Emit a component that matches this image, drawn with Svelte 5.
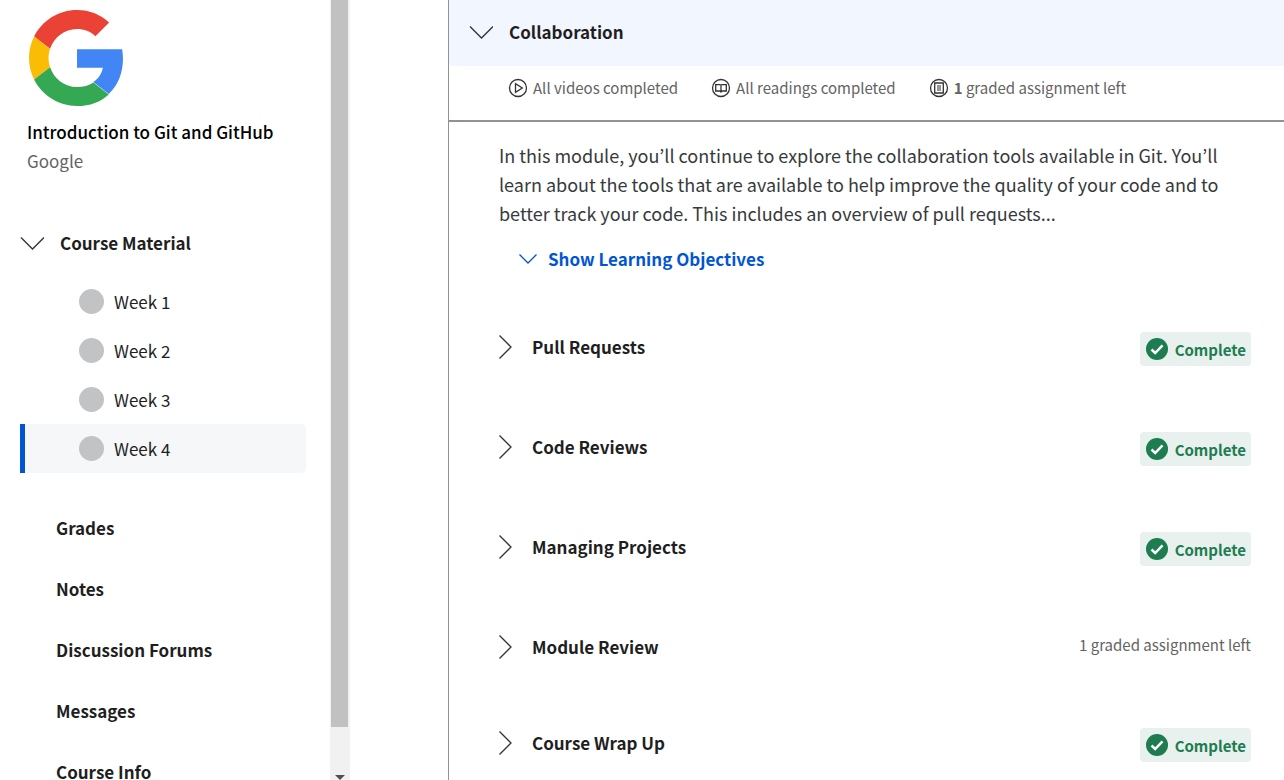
<script>
  const weeks = ['Week 1', 'Week 2', 'Week 3', 'Week 4'];
  const current = 'Week 4';
  const links = ['Grades', 'Notes', 'Discussion Forums', 'Messages', 'Course Info'];
  const lessons = [
    { title: 'Pull Requests', complete: true },
    { title: 'Code Reviews', complete: true },
    { title: 'Managing Projects', complete: true },
    { title: 'Module Review', complete: false, note: '1 graded assignment left' },
    { title: 'Course Wrap Up', complete: true }
  ];
</script>

<div class="page">
  <aside class="sidebar">
    <header class="course">
      <svg class="logo" viewBox="0 0 47 48" aria-hidden="true">
        <path fill="#EA4335" d="M24 9.5c3.54 0 6.71 1.22 9.21 3.6l6.85-6.85C35.9 2.38 30.47 0 24 0 14.62 0 6.51 5.38 2.56 13.22l7.98 6.19C12.43 13.72 17.74 9.5 24 9.5z" />
        <path fill="#4285F4" d="M46.98 24.55c0-1.57-.15-3.09-.38-4.95H24v9.22h12.94c-.58 2.96-2.26 5.48-4.78 7.18l7.73 6c4.51-4.18 7.09-10.36 7.09-17.45z" />
        <path fill="#FBBC05" d="M10.53 28.59c-.48-1.45-.76-2.99-.76-4.59s.27-3.14.76-4.59l-7.98-6.19C.92 16.46 0 20.12 0 24c0 3.88.92 7.54 2.56 10.78l7.97-6.19z" />
        <path fill="#34A853" d="M24 48c6.48 0 11.93-2.13 15.89-5.81l-7.73-6c-2.15 1.45-4.92 2.3-8.16 2.3-6.26 0-11.57-4.22-13.47-9.91l-7.98 6.19C6.51 42.62 14.62 48 24 48z" />
      </svg>
      <h1>Introduction to Git and GitHub</h1>
      <p>Google</p>
    </header>
    <nav>
      <button class="material" type="button" aria-expanded="true">
        <svg class="chevron" viewBox="0 0 24 24" aria-hidden="true"><path d="M1 6.500L12.500 18L24 6.500" /></svg>
        Course Material
      </button>
      <ul class="weeks">
        {#each weeks as week}
          <li>
            <a href="#top" class:current={week === current}><span class="dot"></span>{week}</a>
          </li>
        {/each}
      </ul>
      <ul class="links">
        {#each links as link}
          <li><a href="#top">{link}</a></li>
        {/each}
      </ul>
    </nav>
  </aside>

  <div class="scrollbar" aria-hidden="true">
    <div class="thumb"></div>
    <div class="track"></div>
    <svg class="arrow" viewBox="0 0 10 5"><path d="M0 0H10L5 5Z" /></svg>
  </div>

  <main>
    <button class="module" type="button" aria-expanded="true">
      <svg class="chevron" viewBox="0 0 24 24" aria-hidden="true"><path d="M1 6.500L12.500 18L24 6.500" /></svg>
      Collaboration
    </button>
    <ul class="progress">
      <li>
        <svg viewBox="0 0 20 20" aria-hidden="true"><circle cx="10" cy="10" r="8.500" /><path d="M7.500 5.700V14.300L14.300 10Z" /></svg>
        All videos completed
      </li>
      <li>
        <svg viewBox="0 0 20 20" aria-hidden="true"><circle cx="10" cy="10" r="8.500" /><path d="M4.700 6.700H9L10 7.300L11 6.700H15.300V13H11L10 14L9 13H4.700ZM10 7V14" /></svg>
        All readings completed
      </li>
      <li>
        <svg viewBox="0 0 20 20" aria-hidden="true"><circle cx="10" cy="10" r="8.500" /><path d="M5.700 5H14.300V15H5.700Z" /><path class="fine" d="M8 8H12M8 10H12M8 12H12" /></svg>
        <span><strong>1</strong> graded assignment left</span>
      </li>
    </ul>
    <section class="body">
      <p class="summary">
        In this module, you’ll continue to explore the collaboration tools available in Git. You’ll learn about the tools that are available to help improve the quality of your code and to better track your code. This includes an overview of pull requests...
      </p>
      <button class="objectives" type="button">
        <svg viewBox="0 0 20 20" aria-hidden="true"><path d="M1.500 5.500L10 14L18.500 5.500" /></svg>
        Show Learning Objectives
      </button>
      <ul class="lessons">
        {#each lessons as lesson}
          <li>
            <button type="button" aria-expanded="false">
              <svg class="chevron" viewBox="0 0 24 24" aria-hidden="true"><path d="M0.500 0.500L12 12L0.500 23.500" /></svg>
              {lesson.title}
            </button>
            {#if lesson.complete}
              <span class="badge">
                <svg viewBox="0 0 22 22" aria-hidden="true"><circle cx="11" cy="11" r="11" /><path d="M5.500 11.500L9.200 15L16.500 7.300" /></svg>
                Complete
              </span>
            {:else}
              <span class="note">{lesson.note}</span>
            {/if}
          </li>
        {/each}
      </ul>
    </section>
  </main>
</div>

<style>
  :global(body) {
    background: #fff;
  }
  .page {
    display: flex;
    height: 100vh;
    overflow: hidden;
    font-family: "Noto Sans CJK KR", "Noto Sans", sans-serif;
    font-size: 17px;
    line-height: 29px;
    color: #1f1f1f;
  }
  h1, p, ul {
    margin: 0;
    padding: 0;
  }
  ul {
    list-style: none;
  }
  button {
    display: flex;
    align-items: center;
    padding: 0;
    border: 0;
    background: none;
    color: inherit;
    font: inherit;
    font-weight: 700;
    text-align: left;
    cursor: pointer;
  }
  a {
    color: inherit;
    text-decoration: none;
  }
  svg {
    flex: none;
    fill: none;
  }
  .chevron {
    width: 24px;
    height: 24px;
    stroke: #333;
    stroke-width: 1.3;
  }
  .sidebar {
    flex: 0 0 330px;
    box-sizing: border-box;
    padding: 10px 24px 0 20px;
    overflow: hidden;
  }
  .course {
    padding-left: 7px;
  }
  .logo {
    display: block;
    width: 94px;
    height: 96px;
    margin: 0 0 11px 2px;
  }
  h1 {
    font-size: 17px;
    font-weight: 500;
    color: #000;
  }
  .course p {
    color: #636363;
  }
  .material {
    gap: 16px;
    margin: 53px 0 20px;
  }
  .weeks a {
    display: flex;
    align-items: center;
    gap: 10px;
    height: 49px;
    padding-left: 54px;
    border-left: 5px solid transparent;
    border-radius: 0 5px 5px 0;
  }
  .weeks a.current {
    border-left-color: #0056d2;
    background: #f5f7f8;
  }
  .dot {
    width: 25px;
    height: 25px;
    border-radius: 50%;
    background: #c1c3c5;
  }
  .links {
    padding: 24px 0 0 36px;
    font-weight: 700;
    line-height: 61px;
  }
  .scrollbar {
    flex: 0 0 20px;
    box-sizing: border-box;
    display: flex;
    flex-direction: column;
    align-items: center;
    padding-right: 1px;
    background: #f1f1f1;
  }
  .thumb {
    flex: 728;
    width: 17px;
    background: #c1c1c1;
  }
  .track {
    flex: 48;
  }
  .arrow {
    width: 10px;
    height: 5px;
    fill: #505050;
  }
  main {
    flex: 1;
    min-width: 0;
    margin-left: 98px;
    border-left: 1px solid #8f9297;
  }
  .module {
    gap: 16px;
    width: 100%;
    height: 66px;
    padding: 0 20px 3px;
    border-radius: 0 0 0 4px;
    background: #f2f6fe;
    color: #1f1f1f;
  }
  .progress {
    display: flex;
    gap: 33px;
    padding: 7px 20px 18px 59px;
    border-bottom: 2px solid #8f9297;
    font-size: 15px;
    color: #636363;
  }
  .progress li {
    display: flex;
    align-items: center;
    gap: 5px;
  }
  .progress svg {
    width: 20px;
    height: 20px;
    stroke: #333;
    stroke-width: 1.3;
  }
  .progress .fine {
    stroke-width: 1;
  }
  .body {
    padding: 19px 33px 0 50px;
  }
  .summary {
    max-width: 730px;
    font-size: 18px;
    color: #373a3c;
  }
  .objectives {
    gap: 10px;
    margin: 16px 0 59px 19px;
    color: #0056d2;
  }
  .objectives svg {
    width: 20px;
    height: 20px;
    stroke: #0056d2;
    stroke-width: 1.3;
  }
  .lessons {
    display: grid;
    gap: 66px;
  }
  .lessons li {
    display: flex;
    justify-content: space-between;
    align-items: flex-start;
    min-height: 30px;
  }
  .lessons button {
    gap: 9px;
  }
  .badge {
    display: flex;
    align-items: center;
    gap: 7px;
    height: 34px;
    padding: 0 5px 0 6px;
    border-radius: 4px;
    background: #e8f1ee;
    font-size: 15px;
    font-weight: 700;
    color: #1d7c50;
  }
  .badge svg {
    width: 22px;
    height: 22px;
  }
  .badge circle {
    fill: #1d7c50;
  }
  .badge path {
    stroke: #fff;
    stroke-width: 2.5;
  }
  .note {
    font-size: 15px;
    line-height: 26px;
    color: #636363;
  }
</style>
